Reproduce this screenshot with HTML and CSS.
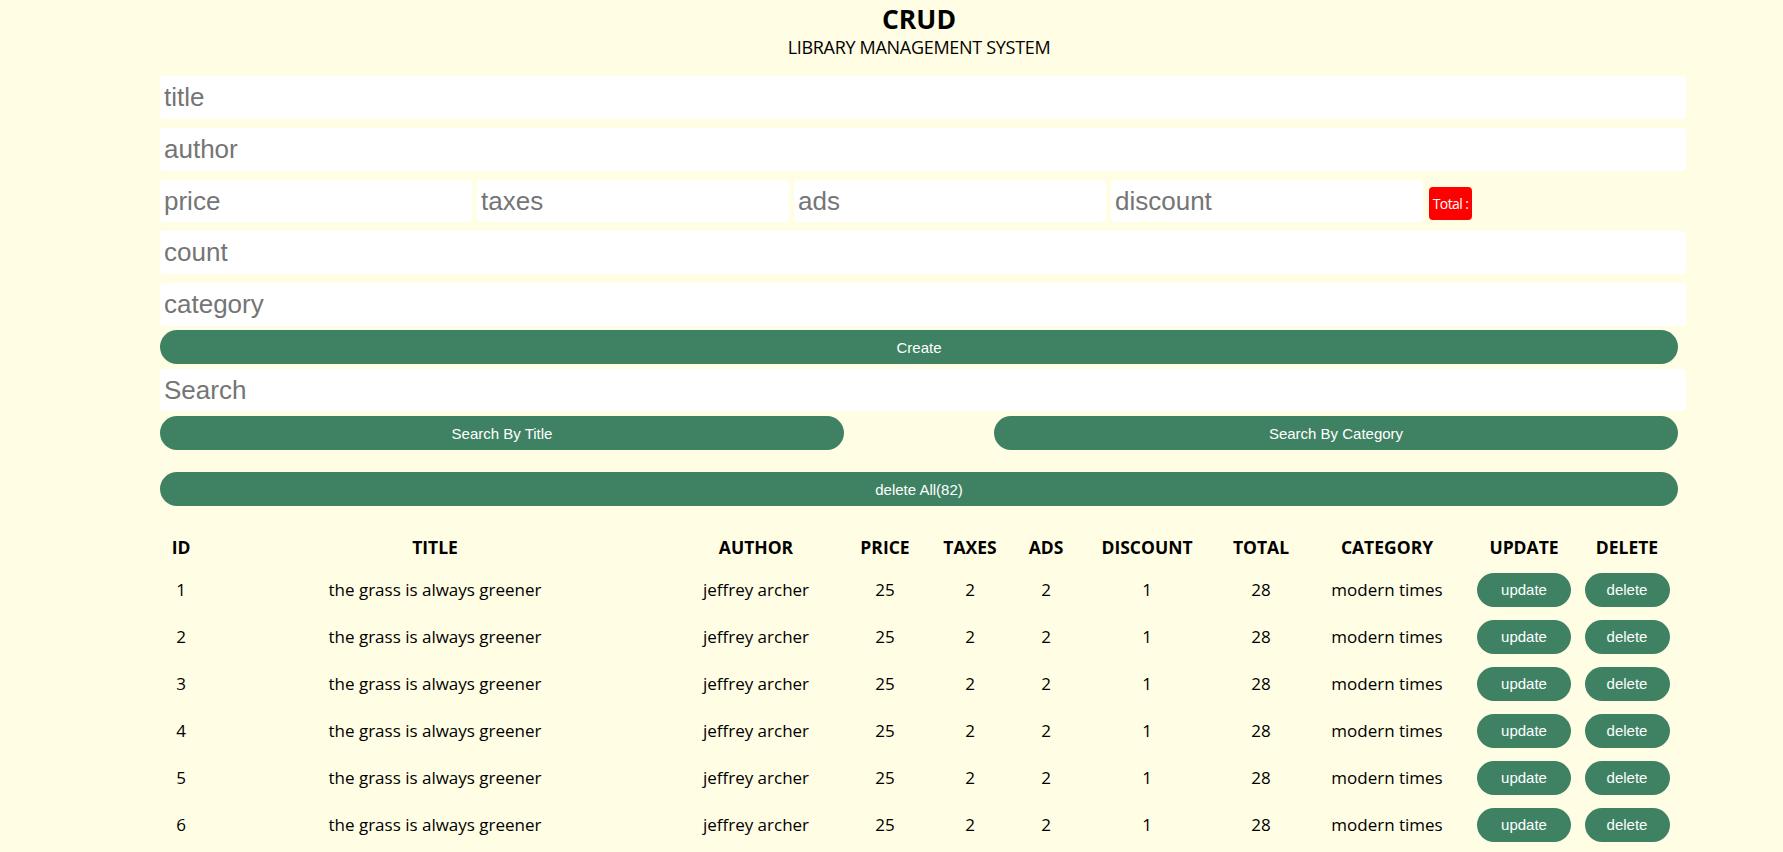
FILE: index.html
```html
<!DOCTYPE html>
<html lang="en">
<head>
<meta charset="UTF-8">
<title>CRUD</title>
<link rel="stylesheet" href="styles.css">
</head>
<body>
<div class="crud">
  <div class="head">
    <h2 class="head-title">CRUD</h2>
    <p class="head-sub">LIBRARY MANAGEMENT SYSTEM</p>
  </div>
  <div class="inputs">
    <input class="field" type="text" placeholder="title">
    <input class="field" type="text" placeholder="author">
    <div class="price">
      <input class="field field-price" type="number" placeholder="price">
      <input class="field field-price" type="number" placeholder="taxes">
      <input class="field field-price" type="number" placeholder="ads">
      <input class="field field-price" type="number" placeholder="discount">
      <small class="total">Total :</small>
    </div>
    <input class="field" type="number" placeholder="count">
    <input class="field field-last" type="text" placeholder="category">
    <button class="btn btn-create">Create</button>
  </div>
  <div class="outputs">
    <div class="search-block">
      <input class="field field-search" type="text" placeholder="Search">
      <div class="btn-search">
        <button class="btn btn-half">Search By Title</button>
        <button class="btn btn-half">Search By Category</button>
      </div>
    </div>
    <div class="delete-all">
      <button class="btn">delete All(82)</button>
    </div>
    <table class="table">
      <colgroup>
        <col class="c-id"><col class="c-title"><col class="c-author"><col class="c-price"><col class="c-taxes"><col class="c-ads"><col class="c-discount"><col class="c-total"><col class="c-category"><col class="c-update"><col class="c-delete">
      </colgroup>
      <thead>
        <tr>
          <th>ID</th><th>TITLE</th><th>AUTHOR</th><th>PRICE</th><th>TAXES</th><th>ADS</th><th>DISCOUNT</th><th>TOTAL</th><th>CATEGORY</th><th>UPDATE</th><th>DELETE</th>
        </tr>
      </thead>
      <tbody>
        <tr><td>1</td><td>the grass is always greener</td><td>jeffrey archer</td><td>25</td><td>2</td><td>2</td><td>1</td><td>28</td><td>modern times</td><td><button class="row-btn row-update">update</button></td><td><button class="row-btn row-delete">delete</button></td></tr>
        <tr><td>2</td><td>the grass is always greener</td><td>jeffrey archer</td><td>25</td><td>2</td><td>2</td><td>1</td><td>28</td><td>modern times</td><td><button class="row-btn row-update">update</button></td><td><button class="row-btn row-delete">delete</button></td></tr>
        <tr><td>3</td><td>the grass is always greener</td><td>jeffrey archer</td><td>25</td><td>2</td><td>2</td><td>1</td><td>28</td><td>modern times</td><td><button class="row-btn row-update">update</button></td><td><button class="row-btn row-delete">delete</button></td></tr>
        <tr><td>4</td><td>the grass is always greener</td><td>jeffrey archer</td><td>25</td><td>2</td><td>2</td><td>1</td><td>28</td><td>modern times</td><td><button class="row-btn row-update">update</button></td><td><button class="row-btn row-delete">delete</button></td></tr>
        <tr><td>5</td><td>the grass is always greener</td><td>jeffrey archer</td><td>25</td><td>2</td><td>2</td><td>1</td><td>28</td><td>modern times</td><td><button class="row-btn row-update">update</button></td><td><button class="row-btn row-delete">delete</button></td></tr>
        <tr><td>6</td><td>the grass is always greener</td><td>jeffrey archer</td><td>25</td><td>2</td><td>2</td><td>1</td><td>28</td><td>modern times</td><td><button class="row-btn row-update">update</button></td><td><button class="row-btn row-delete">delete</button></td></tr>
      </tbody>
    </table>
  </div>
</div>
</body>
</html>
```
FILE: styles.css
```css
* { box-sizing: border-box; }
html, body { margin: 0; padding: 0; }
body {
  background: #fffde3;
  font-family: "Open Sans", "Noto Sans", sans-serif;
  color: #000;
  overflow: hidden;
}
.crud {
  width: 1526px;
  margin-left: 160px;
}
.head {
  text-align: center;
  width: 1518px;
}
.head-title {
  margin: 0;
  padding-top: 3px;
  font-size: 26.5px;
  line-height: 32px;
  font-weight: 700;
}
.head-sub {
  margin: 0;
  font-size: 18px;
  line-height: 24px;
  letter-spacing: -0.3px;
}
.inputs {
  margin-top: 17px;
  display: flex;
  flex-direction: column;
}
.field {
  display: block;
  width: 1526px;
  height: 43px;
  border: none;
  outline: none;
  background: #fff;
  border-radius: 4px;
  padding: 0 4px;
  margin: 0 0 9px 0;
  font-family: "Liberation Sans", Arial, sans-serif;
  font-size: 26px;
  color: #333;
}
.field::placeholder { color: #757575; }
.price {
  display: flex;
  align-items: center;
  gap: 5px;
  margin-bottom: 9px;
}
.field.field-price {
  width: 312px;
  height: 42px;
  margin: 0;
}
.total {
  margin-left: 1px;
  width: 43px;
  height: 33px;
  background: #ff0000;
  color: #fff;
  border-radius: 4px;
  font-family: "Open Sans", "Noto Sans", sans-serif;
  font-size: 14px;
  letter-spacing: -0.6px;
  display: flex;
  align-items: center;
  justify-content: center;
  white-space: nowrap;
  margin-top: 4px;
}
.btn {
  display: block;
  width: 1518px;
  height: 34px;
  border: none;
  border-radius: 17px;
  background: #3e8263;
  color: #fff;
  font-family: "Liberation Sans", Arial, sans-serif;
  font-size: 15px;
  cursor: pointer;
}
.field.field-last { margin-bottom: 4px; }
.btn-create { margin-bottom: 5px; }
.field.field-search { margin-bottom: 5px; height: 42px; }
.btn-search {
  display: flex;
  justify-content: space-between;
  width: 1518px;
}
.btn-half { width: 684px; }
.delete-all { margin-top: 22px; }
.table {
  margin-top: 22px;
  width: 1514px;
  table-layout: fixed;
  border-collapse: collapse;
  text-align: center;
  font-size: 17px;
}
.c-id { width: 42px; }
.c-title { width: 466px; }
.c-author { width: 176px; }
.c-price { width: 82px; }
.c-taxes { width: 88px; }
.c-ads { width: 64px; }
.c-discount { width: 138px; }
.c-total { width: 90px; }
.c-category { width: 162px; }
.c-update { width: 112px; }
.c-delete { width: 94px; }
.table th {
  height: 38px;
  font-weight: 700;
  font-size: 17.5px;
  padding: 0;
}
.table td {
  height: 47px;
  padding: 0;
  white-space: nowrap;
}
.row-btn {
  height: 34px;
  border: none;
  border-radius: 17px;
  background: #3e8263;
  color: #fff;
  font-family: "Liberation Sans", Arial, sans-serif;
  font-size: 15px;
  cursor: pointer;
  padding: 0;
}
.row-update { width: 94px; }
.row-delete { width: 85px; }
```
